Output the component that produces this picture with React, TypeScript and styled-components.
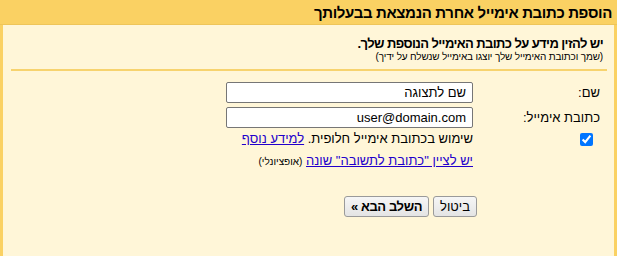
import React from "react";
import styled, { createGlobalStyle } from "styled-components";

const GlobalStyle = createGlobalStyle`
  html, body {
    margin: 0;
    padding: 0;
    background: #fff7d7;
  }
  body {
    font-family: "Liberation Sans", Arial, sans-serif;
    font-size: 13px;
    color: #000;
  }
`

const Dialog = styled.div`
  direction: rtl;
  width: 617px;
  height: 256px;
  box-sizing: border-box;
  background-color: #fff6d8;
  border-left: 3px solid #fad163;
  border-right: 3px solid #fad163;
`

const Header = styled.div`
  height: 24px;
  background-color: #fad163;
  border-bottom: 1px solid #eec55a;
  margin: 0 -3px;
  padding: 0 5px;
  display: flex;
  align-items: center;
  font-size: 15px;
  letter-spacing: -0.35px;
  font-weight: bold;
  color: #000;
`

const Intro = styled.div`
  padding: 11px 11px 0 0;
`

const Title = styled.div`
  font-size: 13px;
  font-weight: bold;
  letter-spacing: -0.6px;
  line-height: 15px;
`

const Note = styled.div`
  font-size: 10px;
  letter-spacing: -0.15px;
  line-height: 12px;
`

const Divider = styled.div`
  height: 2px;
  margin: 6px 7px 0 8px;
  background-color: #f7d36e;
`

const Form = styled.div`
  display: grid;
  grid-template-columns: 120px 247px;
  column-gap: 7px;
  padding: 11px 14px 0 0;
  align-items: center;
`

const Label = styled.div<{ $gap?: number }>`
  font-size: 13px;
  line-height: 21px;
  margin-bottom: ${p => p.$gap ?? 0}px;
`

const Field = styled.input`
  box-sizing: border-box;
  width: 247px;
  height: 21px;
  margin: 0;
  padding: 0 6px;
  border: 1px solid #767676;
  border-radius: 2px;
  background: #fff;
  font-family: "Liberation Sans", Arial, sans-serif;
  font-size: 13px;
  color: #000;
  direction: rtl;
  text-align: right;
`

const FieldCell = styled.div<{ $gap?: number }>`
  margin-bottom: ${p => p.$gap ?? 0}px;
`

const CheckCell = styled.div`
  display: flex;
  align-items: center;
  padding-right: 7px;
  height: 18px;
  margin-top: 2px;
`

const Check = styled.input`
  margin: 0;
  width: 13px;
  height: 13px;
  accent-color: #0075ff;
`

const TextLine = styled.div<{ $top?: number }>`
  font-size: 13px;
  line-height: 18px;
  margin-top: ${p => p.$top ?? 0}px;
  white-space: nowrap;
`

const Link = styled.a`
  color: #2200cc;
  text-decoration: underline;
  cursor: pointer;
`

const Small = styled.span`
  font-size: 10px;
`

const Actions = styled.div`
  display: flex;
  gap: 4px;
  padding: 25px 137px 0 0;
`

const Button = styled.button<{ $bold?: boolean }>`
  height: 21px;
  padding: 0 6px;
  border: 1px solid #9a9a9a;
  border-radius: 3px;
  background: linear-gradient(#f6f6f6, #e4e4e4);
  font-family: "Liberation Sans", Arial, sans-serif;
  font-size: 13px;
  font-weight: ${p => (p.$bold ? "bold" : "normal")};
  letter-spacing: ${p => (p.$bold ? "-0.4px" : "0")};
  color: #000;
  direction: rtl;
`

export default function App() {
  return (
    <>
      <GlobalStyle />
      <Dialog>
        <Header>הוספת כתובת אימייל אחרת הנמצאת בבעלותך</Header>
        <Intro>
          <Title>יש להזין מידע על כתובת האימייל הנוספת שלך.</Title>
          <Note>(שמך וכתובת האימייל שלך יוצגו באימייל שנשלח על ידיך)</Note>
        </Intro>
        <Divider />
        <Form>
          <Label $gap={4}>שם:</Label>
          <FieldCell $gap={4}>
            <Field defaultValue="שם לתצוגה" />
          </FieldCell>
          <Label>כתובת אימייל:</Label>
          <FieldCell>
            <Field defaultValue="user@domain.com" />
          </FieldCell>
          <CheckCell>
            <Check type="checkbox" defaultChecked />
          </CheckCell>
          <TextLine $top={2}>
            שימוש בכתובת אימייל חלופית. <Link>למידע נוסף</Link>
          </TextLine>
          <div />
          <TextLine $top={4}>
            <Link>יש לציין "כתובת לתשובה" שונה</Link> <Small>(אופציונלי)</Small>
          </TextLine>
        </Form>
        <Actions>
          <Button>ביטול</Button>
          <Button $bold>השלב הבא »</Button>
        </Actions>
      </Dialog>
    </>
  );
}
